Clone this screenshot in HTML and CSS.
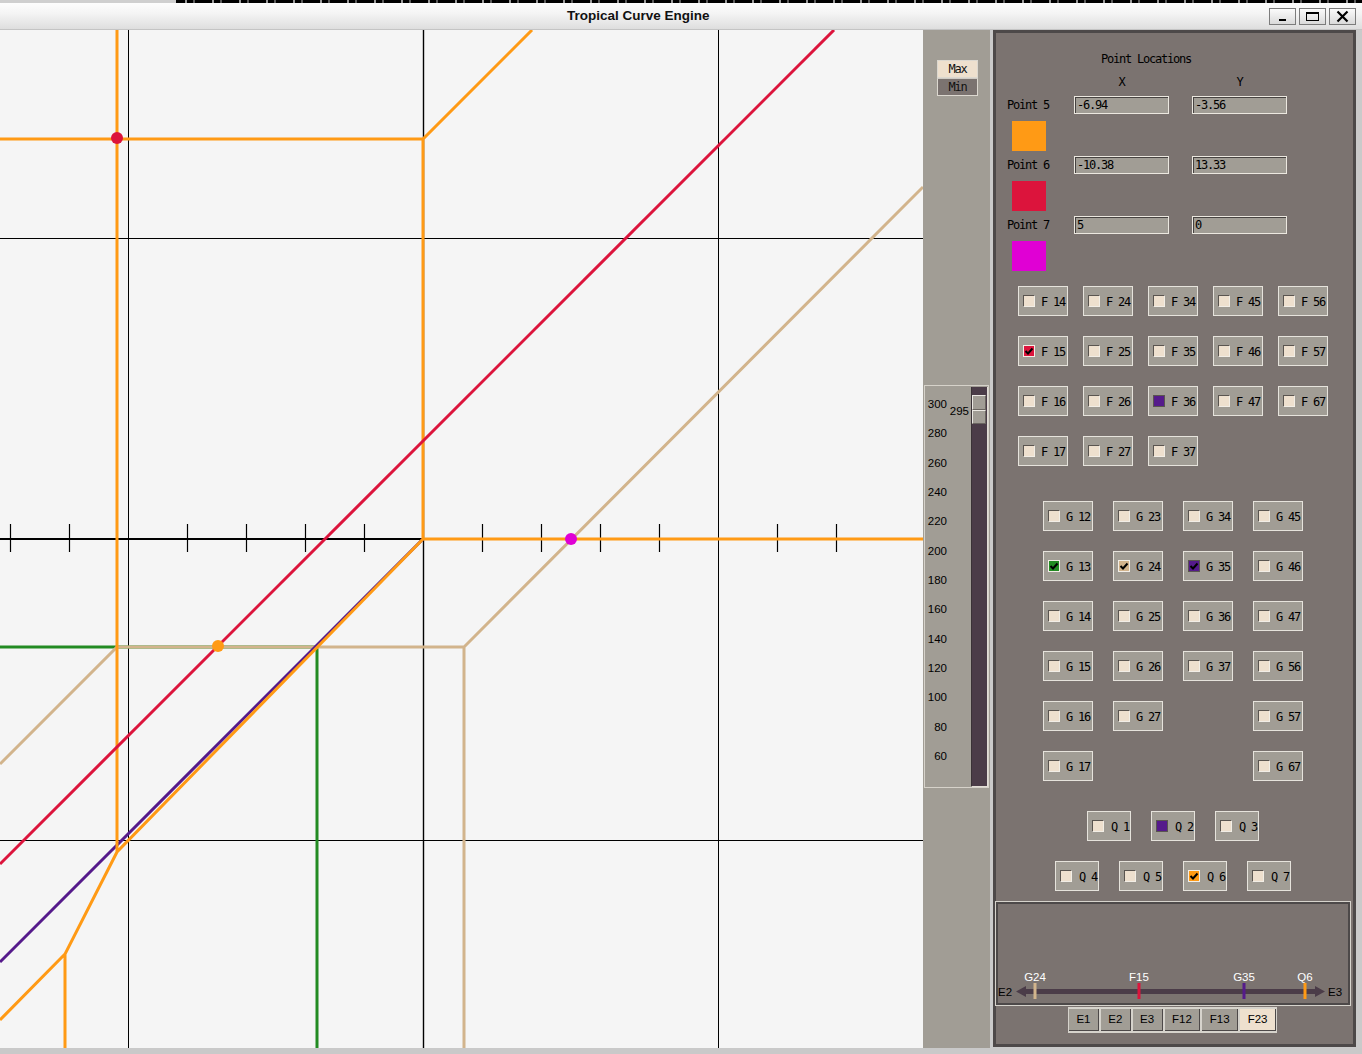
FILE: index.html
```html
<!DOCTYPE html>
<html>
<head>
<meta charset="utf-8">
<title>Tropical Curve Engine</title>
<link rel="stylesheet" href="styles.css">
</head>
<body>
<div class="topstrip"><div class="ts-left"></div><div class="ts-right"></div></div>
<div class="titlebar">
  <div class="tb-spacer"></div>
  <div class="title">Tropical Curve Engine</div>
  <div class="tb-right">
    <div class="wbtn"><svg width="27" height="17" viewBox="0 0 27 17"><rect x="10" y="11" width="7" height="2" fill="#000"/></svg></div>
    <div class="wbtn"><svg width="27" height="17" viewBox="0 0 27 17"><rect x="7.5" y="4.5" width="12" height="8" fill="none" stroke="#000" stroke-width="1"/><rect x="7" y="4" width="13" height="2" fill="#000"/></svg></div>
    <div class="wbtn"><svg width="27" height="17" viewBox="0 0 27 17"><path d="M8.5 3.5 L18.5 13.5 M18.5 3.5 L8.5 13.5" stroke="#000" stroke-width="2.2"/></svg></div>
  </div>
</div>
<div class="main">
  <div class="canvas">
    <svg width="923" height="1018" viewBox="0 0 923 1018">
      <g stroke="#000" fill="none">
        <line x1="128.5" y1="0" x2="128.5" y2="1018" stroke-width="1"/>
        <line x1="718.5" y1="0" x2="718.5" y2="1018" stroke-width="1"/>
        <line x1="423.5" y1="0" x2="423.5" y2="1018" stroke-width="1.4"/>
        <line x1="0" y1="208.5" x2="923" y2="208.5" stroke-width="1"/>
        <line x1="0" y1="810.5" x2="923" y2="810.5" stroke-width="1"/>
        <line x1="0" y1="509" x2="923" y2="509" stroke-width="2"/>
        <path stroke-width="1.2" d="M10.5 494V522M69.5 494V522M187.5 494V522M246.5 494V522M305.5 494V522M364.5 494V522M482.5 494V522M541.5 494V522M600.5 494V522M659.5 494V522M777.5 494V522M836.5 494V522"/>
      </g>
      <g fill="none" stroke-width="3" stroke-linejoin="miter">
        <path stroke="#228b22" d="M0 617H317V1018"/>
        <path stroke="#d2b48c" d="M923 157L464 617V1018M464 617H117L0 734"/>
        <path stroke="#551a8b" d="M423 509L0 932"/>
        <path stroke="#ff9a15" d="M0 109H423L532 0M423 109V509H923M117 0V822M423 509L117 822L65 924V1018M65 924L0 990"/>
        <path stroke="#dc143c" d="M834 0L0 834"/>
      </g>
      <circle cx="117" cy="108" r="6" fill="#dc143c"/>
      <circle cx="218" cy="616" r="6" fill="#ff9a15"/>
      <circle cx="571" cy="509" r="6" fill="#e000d4"/>
    </svg>
  </div>
  <div class="midcol">
    <div class="mm mm-max">Max</div>
    <div class="mm mm-min">Min</div>
    <div class="slider">
      <div class="scale">
        <div>300</div><div>280</div><div>260</div><div>240</div><div>220</div><div>200</div><div>180</div><div>160</div><div>140</div><div>120</div><div>100</div><div>80</div><div>60</div>
      </div>
      <div class="sval">295</div>
      <div class="trough"><div class="thumb"><div class="th-half"></div><div class="th-half"></div></div></div>
    </div>
  </div>
  <div class="panel">
    <div class="panel-inner">
      <div class="pl-title">Point Locations</div>
      <div class="prow phead"><span class="plabel"></span><span class="hc">X</span><span class="hc">Y</span></div>
      <div class="prow"><span class="plabel">Point 5</span><div class="inp">-6.94</div><div class="inp">-3.56</div></div>
      <div class="swatch sw-orange"></div>
      <div class="prow prow-next"><span class="plabel">Point 6</span><div class="inp">-10.38</div><div class="inp">13.33</div></div>
      <div class="swatch sw-red"></div>
      <div class="prow prow-next"><span class="plabel">Point 7</span><div class="inp">5</div><div class="inp">0</div></div>
      <div class="swatch sw-magenta"></div>

      <div class="fgrid">
        <div class="cb"><span class="box"></span><span class="lbl">F 14</span></div>
        <div class="cb"><span class="box"></span><span class="lbl">F 24</span></div>
        <div class="cb"><span class="box"></span><span class="lbl">F 34</span></div>
        <div class="cb"><span class="box"></span><span class="lbl">F 45</span></div>
        <div class="cb"><span class="box"></span><span class="lbl">F 56</span></div>
        <div class="cb"><span class="box on c-red"><svg viewBox="0 0 10 10"><path d="M1.5 5L4 7.5L8.5 2.5"/></svg></span><span class="lbl">F 15</span></div>
        <div class="cb"><span class="box"></span><span class="lbl">F 25</span></div>
        <div class="cb"><span class="box"></span><span class="lbl">F 35</span></div>
        <div class="cb"><span class="box"></span><span class="lbl">F 46</span></div>
        <div class="cb"><span class="box"></span><span class="lbl">F 57</span></div>
        <div class="cb"><span class="box"></span><span class="lbl">F 16</span></div>
        <div class="cb"><span class="box"></span><span class="lbl">F 26</span></div>
        <div class="cb"><span class="box on c-purple"></span><span class="lbl">F 36</span></div>
        <div class="cb"><span class="box"></span><span class="lbl">F 47</span></div>
        <div class="cb"><span class="box"></span><span class="lbl">F 67</span></div>
        <div class="cb"><span class="box"></span><span class="lbl">F 17</span></div>
        <div class="cb"><span class="box"></span><span class="lbl">F 27</span></div>
        <div class="cb"><span class="box"></span><span class="lbl">F 37</span></div>
      </div>

      <div class="ggrid">
        <div class="cb"><span class="box"></span><span class="lbl">G 12</span></div>
        <div class="cb"><span class="box"></span><span class="lbl">G 23</span></div>
        <div class="cb"><span class="box"></span><span class="lbl">G 34</span></div>
        <div class="cb"><span class="box"></span><span class="lbl">G 45</span></div>
        <div class="cb"><span class="box on c-green"><svg viewBox="0 0 10 10"><path d="M1.5 5L4 7.5L8.5 2.5"/></svg></span><span class="lbl">G 13</span></div>
        <div class="cb"><span class="box on c-tan"><svg viewBox="0 0 10 10"><path d="M1.5 5L4 7.5L8.5 2.5"/></svg></span><span class="lbl">G 24</span></div>
        <div class="cb"><span class="box on c-purple"><svg viewBox="0 0 10 10"><path d="M1.5 5L4 7.5L8.5 2.5"/></svg></span><span class="lbl">G 35</span></div>
        <div class="cb"><span class="box"></span><span class="lbl">G 46</span></div>
        <div class="cb"><span class="box"></span><span class="lbl">G 14</span></div>
        <div class="cb"><span class="box"></span><span class="lbl">G 25</span></div>
        <div class="cb"><span class="box"></span><span class="lbl">G 36</span></div>
        <div class="cb"><span class="box"></span><span class="lbl">G 47</span></div>
        <div class="cb"><span class="box"></span><span class="lbl">G 15</span></div>
        <div class="cb"><span class="box"></span><span class="lbl">G 26</span></div>
        <div class="cb"><span class="box"></span><span class="lbl">G 37</span></div>
        <div class="cb"><span class="box"></span><span class="lbl">G 56</span></div>
        <div class="cb"><span class="box"></span><span class="lbl">G 16</span></div>
        <div class="cb"><span class="box"></span><span class="lbl">G 27</span></div>
        <div class="gap"></div>
        <div class="cb"><span class="box"></span><span class="lbl">G 57</span></div>
        <div class="cb"><span class="box"></span><span class="lbl">G 17</span></div>
        <div class="gap"></div>
        <div class="gap"></div>
        <div class="cb"><span class="box"></span><span class="lbl">G 67</span></div>
      </div>

      <div class="qrow q1">
        <div class="cb q"><span class="box"></span><span class="lbl">Q 1</span></div>
        <div class="cb q"><span class="box on c-purple"></span><span class="lbl">Q 2</span></div>
        <div class="cb q"><span class="box"></span><span class="lbl">Q 3</span></div>
      </div>
      <div class="qrow q2">
        <div class="cb q"><span class="box"></span><span class="lbl">Q 4</span></div>
        <div class="cb q"><span class="box"></span><span class="lbl">Q 5</span></div>
        <div class="cb q"><span class="box on c-orange"><svg viewBox="0 0 10 10"><path d="M1.5 5L4 7.5L8.5 2.5"/></svg></span><span class="lbl">Q 6</span></div>
        <div class="cb q"><span class="box"></span><span class="lbl">Q 7</span></div>
      </div>

      <div class="nframe">
        <svg width="354" height="103" viewBox="0 0 354 103">
          <rect x="28" y="87" width="293" height="5" fill="#4b3c48"/>
          <polygon points="20,89.5 30,84 30,95" fill="#4b3c48"/>
          <polygon points="329,89.5 319,84 319,95" fill="#4b3c48"/>
          <rect x="37.5" y="81" width="3" height="16" fill="#d2b48c"/>
          <rect x="141.5" y="81" width="3" height="16" fill="#dc143c"/>
          <rect x="246.5" y="81" width="3" height="16" fill="#551a8b"/>
          <rect x="307.5" y="81" width="3" height="16" fill="#ff9a15"/>
          <g class="nl-lbl" fill="#fff" text-anchor="middle">
            <text x="39" y="79">G24</text>
            <text x="143" y="79">F15</text>
            <text x="248" y="79">G35</text>
            <text x="309" y="79">Q6</text>
          </g>
          <g class="nl-lbl" fill="#000">
            <text x="2" y="93.5">E2</text>
            <text x="332" y="93.5">E3</text>
          </g>
        </svg>
      </div>
      <div class="tabs">
        <div class="tab">E1</div>
        <div class="tab">E2</div>
        <div class="tab">E3</div>
        <div class="tab wide">F12</div>
        <div class="tab wide">F13</div>
        <div class="tab wide active">F23</div>
      </div>
    </div>
  </div>
</div>
<div class="bottomstrip"></div>
</body>
</html>
```
FILE: styles.css
```css
* { box-sizing: border-box; }
html, body { margin: 0; padding: 0; }
body {
  width: 1362px;
  height: 1054px;
  overflow: hidden;
  background: #c9c9c9;
  font-family: "DejaVu Sans Mono", "Liberation Mono", monospace;
}

.topstrip { height: 3px; display: flex; }
.ts-left { width: 176px; background: #cfcfcf; }
.ts-right {
  flex: 1;
  background: repeating-linear-gradient(90deg, #000 0 9px, #9a9a9a 9px 11px, #000 11px 17px, #5a5a5a 17px 19px, #000 19px 27px);
}

.titlebar {
  height: 27px;
  display: flex;
  align-items: center;
  background: linear-gradient(#fdfdfd, #f4f4f4 40%, #dedede);
  border-bottom: 1px solid #c4c4c4;
  padding-bottom: 2px;
}
.tb-spacer { width: 567px; }
.title {
  font: bold 13.5px "Liberation Sans", Arial, sans-serif;
  color: #111;
}
.tb-right { flex: 1; display: flex; justify-content: flex-end; gap: 3px; padding-right: 6px; padding-top: 2px; }
.wbtn {
  width: 27px;
  height: 17px;
  border: 1px solid #7c7c7c;
  background: linear-gradient(#fbfbfb, #dadada);
  display: flex;
  align-items: center;
  justify-content: center;
}
.wbtn svg { display: block; margin: -1px; }

.main { display: flex; height: 1018px; }
.canvas { width: 923px; height: 1018px; background: #f5f5f5; }
.canvas svg { display: block; }

.midcol {
  width: 67px;
  background: #a19d95;
  padding-top: 30px;
}
.mm {
  width: 41px;
  height: 18px;
  margin-left: 14px;
  font-size: 12px;
  letter-spacing: -1.2px;
  line-height: 16px;
  text-align: center;
  border: 1px solid #dcd8d0;
  color: #111;
}
.mm-max { background: #eee0ce; }
.mm-min { background: #7b7370; border-top-color: #cfcbc4; }

.slider {
  margin-top: 289px;
  margin-left: 1px;
  width: 65px;
  height: 403px;
  border: 1px solid #d6d2ca;
  display: flex;
}
.scale {
  width: 22px;
  padding-top: 4px;
  font: 11.5px "Liberation Sans", Arial, sans-serif;
  color: #000;
  text-align: right;
}
.scale div { height: 29.33px; line-height: 29.33px; }
.sval {
  width: 22px;
  padding-top: 18px;
  font: 11.5px "Liberation Sans", Arial, sans-serif;
  line-height: 14px;
  text-align: right;
}
.trough {
  margin-left: 2px;
  margin-top: 1px;
  width: 17px;
  height: 400px;
  background: #4b3c48;
  border-right: 1px solid #e2ded6;
  border-bottom: 1px solid #e2ded6;
  border-left: 1px solid #3a3236;
  padding-top: 8px;
}
.thumb { width: 14px; height: 29px; display: flex; flex-direction: column; }
.th-half {
  flex: 1;
  background: #a19d95;
  border-top: 1px solid #ebe8e2;
  border-left: 1px solid #ebe8e2;
  border-bottom: 1px solid #6a6560;
  border-right: 1px solid #6a6560;
}

.panel {
  width: 372px;
  background: #cacaca;
  padding-left: 3px;
}
.panel-inner {
  width: 363px;
  height: 1017px;
  background: #7b7370;
  border: 3px solid #4d4949;
  color: #000;
  font-size: 12px;
  letter-spacing: -1.22px;
}

.pl-title { margin-top: 20px; padding-left: 105px; height: 12px; line-height: 12px; }
.prow {
  display: flex;
  padding-left: 11px;
  height: 18px;
  margin-top: 8px;
  align-items: center;
}
.plabel { width: 67px; flex: none; line-height: 18px; }
.prow > :nth-child(2) { width: 95px; flex: none; }
.prow > :nth-child(3) { width: 95px; flex: none; margin-left: 23px; }
.phead { margin-top: 10px; height: 13px; }
.hc { text-align: center; }
.prow-next { margin-top: 5px; }
.inp {
  height: 18px;
  background: #a19d95;
  border: 1px solid #ece8e0;
  box-shadow: inset 1px 1px 0 #474341;
  padding-left: 2px;
  line-height: 16px;
}
.swatch { width: 34px; height: 30px; margin-left: 16px; margin-top: 7px; }
.sw-orange { background: #ff9a15; }
.sw-red { background: #dc143c; }
.sw-magenta { background: #e000d4; }

.cb {
  height: 30px;
  border: 1px solid #e6e3dc;
  background: #a19d95;
  display: flex;
  align-items: center;
  padding-left: 4px;
}
.lbl { padding-top: 1px; }
.box {
  width: 12px;
  height: 12px;
  flex: none;
  background: #eee0ce;
  border-top: 1px solid #5a5550;
  border-left: 1px solid #5a5550;
  border-bottom: 1px solid #f2eee6;
  border-right: 1px solid #f2eee6;
  margin-right: 6px;
  display: flex;
  align-items: center;
  justify-content: center;
}
.box.on { border-top-color: #f2eee6; border-left-color: #f2eee6; }
.box svg { width: 10px; height: 10px; display: block; }
.box svg path { fill: none; stroke: #000; stroke-width: 2; }
.c-red { background: #dc143c; }
.c-purple { background: #551a8b; border-color: #5a5550 !important; }
.c-green { background: #228b22; }
.c-tan { background: #d2b48c; }
.c-orange { background: #ff9a15; }

.fgrid {
  display: grid;
  grid-template-columns: repeat(5, 50px);
  grid-auto-rows: 30px;
  column-gap: 15px;
  row-gap: 20px;
  padding-left: 22px;
  margin-top: 15px;
}
.ggrid {
  display: grid;
  grid-template-columns: repeat(4, 50px);
  grid-auto-rows: 30px;
  column-gap: 20px;
  row-gap: 20px;
  padding-left: 47px;
  margin-top: 35px;
}
.qrow { display: flex; gap: 20px; }
.q { width: 44px; padding-left: 4px; }
.q .box { margin-right: 7px; }
.q1 { margin-top: 30px; padding-left: 91px; }
.q2 { margin-top: 20px; padding-left: 59px; }

.nframe {
  margin-top: 10px;
  margin-left: -1px;
  width: 356px;
  height: 105px;
  border: 1px solid #d6d3cc;
  box-shadow: inset 2px 2px 0 #4d4949, inset -2px -2px 0 #4d4949;
}
.nframe svg { display: block; }
.nl-lbl { font: 11.5px "Liberation Sans", Arial, sans-serif; letter-spacing: 0; }

.tabs {
  margin-top: 1px;
  margin-left: 72px;
  width: 209px;
  height: 26px;
  background: #d6d3cc;
  padding: 2px 1px;
  display: flex;
  gap: 2px;
}
.tab {
  width: 30px;
  height: 22px;
  background: #a19d95;
  border-right: 1px solid #4d4949;
  border-bottom: 1px solid #4d4949;
  font: 11.5px "Liberation Sans", Arial, sans-serif;
  letter-spacing: 0;
  line-height: 21px;
  text-align: center;
  color: #000;
}
.tab.wide { width: 36px; }
.tab.active { background: #eee0ce; }

.bottomstrip { height: 6px; background: #c9c9c9; }
```
